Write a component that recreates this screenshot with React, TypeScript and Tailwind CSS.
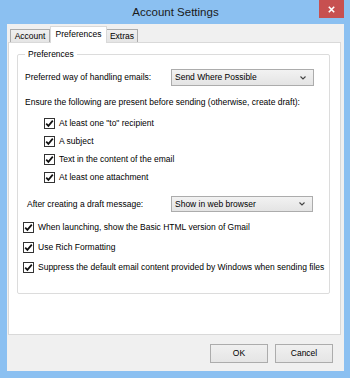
import React from 'react';

const font = { fontFamily: '"Liberation Sans", Arial, sans-serif' };

function Check({ label, className = '' }: { label: string; className?: string }) {
  return (
    <div className={`flex items-center h-[18px] ${className}`}>
      <span className="w-[11px] h-[11px] border border-[#333] bg-white flex items-center justify-center shrink-0">
        <svg width="9" height="9" viewBox="0 0 9 9">
          <path d="M1.2 4.6 L3.4 6.9 L7.8 1.6" fill="none" stroke="#111" strokeWidth="1.7" />
        </svg>
      </span>
      <span className="ml-[4px] whitespace-nowrap">{label}</span>
    </div>
  );
}

function Select({ value, className = '' }: { value: string; className?: string }) {
  return (
    <div
      className={`flex items-center justify-between border border-[#acacac] bg-gradient-to-b from-[#f2f2f2] to-[#e4e4e4] pl-[3px] pr-[7px] ${className}`}
    >
      <span className="whitespace-nowrap">{value}</span>
      <svg width="6" height="4" viewBox="0 0 6 4">
        <path d="M0.5 0.5 L3 3 L5.5 0.5" fill="none" stroke="#444" strokeWidth="1.1" />
      </svg>
    </div>
  );
}

function Button({ label }: { label: string }) {
  return (
    <div className="w-[58px] h-[19px] border border-[#acacac] bg-gradient-to-b from-[#f0f0f0] to-[#e5e5e5] flex items-center justify-center">
      {label}
    </div>
  );
}

export default function App() {
  return (
    <div
      className="w-[350px] h-[378px] bg-[#8bc0f1] flex flex-col pl-[7px] pr-[6px] pb-[7px] text-[8.5px] leading-[11px] text-black"
      style={font}
    >
      {/* title bar */}
      <div className="h-[24px] flex items-start shrink-0">
        <div className="flex-1 text-center text-[11.5px] leading-[25px] text-[#1a1a1a] pl-[25px]">Account Settings</div>
        <div className="w-[25px] h-[18px] bg-[#c75050] flex items-center justify-center">
          <svg width="7" height="7" viewBox="0 0 7 7">
            <path d="M0.8 0.8 L6.2 6.2 M6.2 0.8 L0.8 6.2" stroke="#fff" strokeWidth="1.6" />
          </svg>
        </div>
      </div>

      {/* client area */}
      <div className="flex-1 bg-[#f0f0f0] flex flex-col pt-[2px] pl-[1px] pr-[3px]">
        {/* tabs */}
        <div className="flex items-end h-[16px] ml-[2px]">
          <div className="w-[40px] h-[13px] border border-b-0 border-[#acacac] bg-gradient-to-b from-[#f0f0f0] to-[#e5e5e5] flex items-center justify-center">
            Account
          </div>
          <div className="relative z-10 w-[57px] h-[17px] -mb-px border border-b-0 border-[#d9d9d9] bg-white flex items-start pt-[2px] justify-center">
            Preferences
          </div>
          <div className="w-[31px] h-[13px] border border-b-0 border-l-0 border-[#acacac] bg-gradient-to-b from-[#f0f0f0] to-[#e5e5e5] flex items-center justify-center">
            Extras
          </div>
        </div>

        {/* panel */}
        <div className="h-[293px] border border-[#d9d9d9] bg-white pt-[6px] pl-[8px] pr-[10px]">
          <fieldset className="border border-[#dcdcdc] rounded-[2px] pl-[5px] pb-[17px]">
            <legend className="ml-[2px] px-[3px] leading-[11px]">Preferences</legend>
            <div className="flex items-center h-[17px] mt-[9px]">
              <span className="w-[148px] pl-[2px] whitespace-nowrap">Preferred way of handling emails:</span>
              <Select value="Send Where Possible" className="w-[143px] h-[17px]" />
            </div>
            <div className="h-[12px] mt-[10px] pl-[2px] flex items-center whitespace-nowrap">
              Ensure the following are present before sending (otherwise, create draft):
            </div>
            <div className="mt-[6px] ml-[21px] flex flex-col">
              <Check label={'At least one "to" recipient'} />
              <Check label="A subject" />
              <Check label="Text in the content of the email" />
              <Check label="At least one attachment" />
            </div>
            <div className="flex items-center h-[16px] mt-[10px]">
              <span className="w-[148px] pl-[4px] whitespace-nowrap">After creating a draft message:</span>
              <Select value="Show in web browser" className="w-[142px] h-[16px]" />
            </div>
            <div className="mt-[6px] flex flex-col gap-[2px]">
              <Check label="When launching, show the Basic HTML version of Gmail" />
              <Check label="Use Rich Formatting" />
              <Check label="Suppress the default email content provided by Windows when sending files" />
            </div>
          </fieldset>
        </div>

        {/* buttons */}
        <div className="flex justify-end gap-[7px] mt-[9px] pr-[8px]">
          <Button label="OK" />
          <Button label="Cancel" />
        </div>
      </div>
    </div>
  );
}
